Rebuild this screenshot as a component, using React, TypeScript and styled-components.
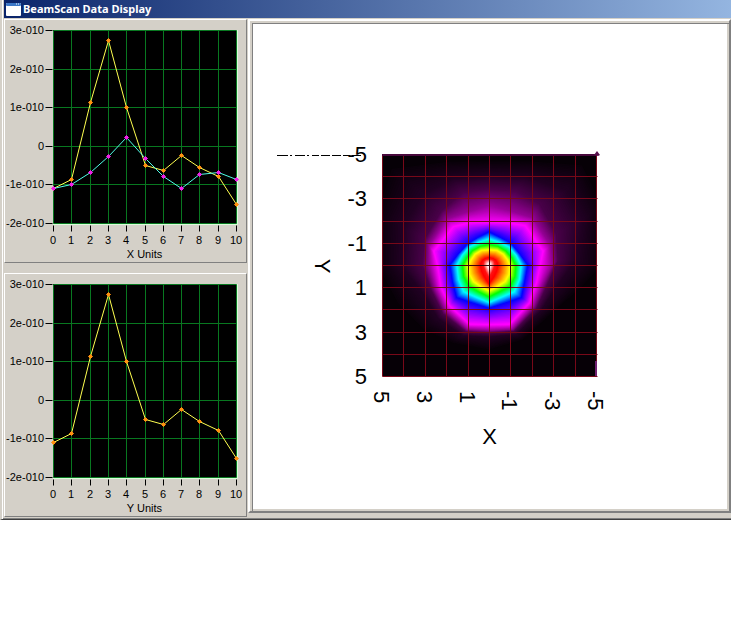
import React from "react";
import styled, { createGlobalStyle } from "styled-components";

const GlobalStyle = createGlobalStyle`
  * { box-sizing: border-box; }
  body { margin: 0; background: #fff; font-family: "Liberation Sans", Arial, sans-serif; }
`;

const Window = styled.main`
  background: #d4d0c8;
  border-left: 2px solid #d4d0c8;
  border-bottom: 1px solid #404040;
  box-shadow: inset 1px 0 #fff, inset 0 -1px #808080;
  padding: 0 0 2px 2px;
`;

const TitleBar = styled.header`
  display: flex;
  align-items: center;
  gap: 2px;
  height: 18px;
  padding-left: 2px;
  background: linear-gradient(to right, #0a246a, #94b5e0);
`;

const Title = styled.h1`
  margin: 0;
  color: #fff;
  font: bold 11px/18px "Noto Sans", "Open Sans", sans-serif;
  white-space: nowrap;
`;

const Body = styled.div`
  display: flex;
  gap: 1px;
`;

const Sidebar = styled.div`
  display: flex;
  flex: none;
  flex-direction: column;
  gap: 10px;
  width: 243px;
  padding-top: 1px;
`;

const ChartFrame = styled.section`
  border: 1px solid;
  border-color: #fff #808080 #808080 #fff;
  height: 244px;
`;

const PlotFrame = styled.section`
  display: flex;
  flex: 1;
  align-items: center;
  justify-content: center;
  min-width: 0;
  margin: 1px 0 4px;
  background: #fff;
  border: 2px solid;
  border-color: #fff #808080 #808080 #fff;
  box-shadow: inset 2px 2px #d4d0c8, inset 3px 3px #808080, inset -2px -2px #d4d0c8;
`;

const Drawing = styled.svg`
  display: block;
  flex: none;
`;

const AxisText = styled.text<{ $size: number }>`
  font-family: "Liberation Sans", Arial, sans-serif;
  font-size: ${(p) => p.$size}px;
  fill: #000;
`;

type Series = { line: string; marker: string; values: number[] };

const horizontal: Series = {
  line: "#ffff50",
  marker: "#ff9010",
  values: [-1.09, -0.87, 1.13, 2.74, 1, -0.5, -0.63, -0.24, -0.55, -0.77, -1.51],
};
const vertical: Series = {
  line: "#50ffe8",
  marker: "#f020e8",
  values: [-1.09, -1, -0.68, -0.27, 0.23, -0.32, -0.79, -1.1, -0.73, -0.68, -0.86],
};

const LEFT = 48;
const TOP = 10;
const WIDTH = 183;
const HEIGHT = 193;
const xAt = (i: number) => LEFT + Math.round((i * WIDTH) / 10);
const yAt = (v: number) => TOP + Math.round(((3 - v) * HEIGHT) / 5);
const units = Array.from({ length: 11 }, (_, i) => i);
const levels = [3, 2, 1, 0, -1, -2];

function LineChart({ label, series }: { label: string; series: Series[] }) {
  return (
    <ChartFrame>
      <Drawing width="241" height="242" viewBox="0 0 241 242" role="img" aria-label={label}>
        <rect x={LEFT} y={TOP} width={WIDTH} height={HEIGHT} fill="#000" />
        <g stroke="#087820" transform="translate(0.5 0.5)">
          {units.map((i) => (
            <path key={i} d={`M${xAt(i)} ${TOP}V${TOP + HEIGHT}`} />
          ))}
          {levels.map((v) => (
            <path key={v} d={`M${LEFT} ${yAt(v)}H${LEFT + WIDTH}`} />
          ))}
        </g>
        <path
          d={`M${LEFT} ${TOP + HEIGHT + 1.5}H${LEFT + WIDTH + 1.5}V${TOP}`}
          fill="none"
          stroke="#d8ffd8"
        />
        <g stroke="#000" transform="translate(0.5 0.5)">
          {levels.map((v) => (
            <path key={v} d={`M${LEFT - 8} ${yAt(v)}h7`} />
          ))}
          {units.map((i) => (
            <path key={i} d={`M${xAt(i)} ${TOP + HEIGHT + 2}v6`} />
          ))}
        </g>
        {levels.map((v) => (
          <AxisText key={v} $size={11} x={LEFT - 9} y={yAt(v) + 4} textAnchor="end">
            {v === 0 ? "0" : `${v}e-010`}
          </AxisText>
        ))}
        {units.map((i) => (
          <AxisText key={i} $size={11} x={xAt(i)} y={TOP + HEIGHT + 21} textAnchor="middle">
            {i}
          </AxisText>
        ))}
        <AxisText $size={11} x={LEFT + WIDTH / 2} y={TOP + HEIGHT + 35} textAnchor="middle">
          {label}
        </AxisText>
        {series.map((s) => (
          <g key={s.line} transform="translate(0.5 0.5)">
            <polyline
              points={s.values.map((v, i) => `${xAt(i)},${yAt(v)}`).join(" ")}
              fill="none"
              stroke={s.line}
            />
            {s.values.map((v, i) => (
              <path key={i} d={`M${xAt(i) - 2} ${yAt(v)}l2-2 2 2-2 2z`} fill={s.marker} stroke={s.marker} />
            ))}
          </g>
        ))}
      </Drawing>
    </ChartFrame>
  );
}

type Contour = { rgb: number[]; points: number[][] };

/* Sixteen vertices per contour, clockwise from the top, in thirds of a pixel. */
const contours: Contour[] = [
  {
    rgb: [8, 0, 8],
    points: [[358, 50], [480, 50], [640, 60], [700, 180], [700, 366], [640, 430], [570, 490], [460, 590], [358, 620], [250, 600], [160, 560], [80, 480], [20, 366], [20, 200], [60, 70], [240, 50]],
  },
  {
    rgb: [34, 0, 36],
    points: [[358, 95], [470, 100], [590, 140], [640, 230], [620, 350], [560, 430], [515, 500], [440, 572], [358, 580], [280, 576], [205, 525], [160, 450], [95, 366], [100, 250], [160, 150], [250, 105]],
  },
  {
    rgb: [74, 0, 74],
    points: [[358, 135], [440, 140], [510, 180], [560, 270], [565, 350], [530, 430], [500, 495], [433, 562], [358, 568], [289, 564], [220, 510], [185, 440], [158, 366], [165, 285], [215, 200], [280, 145]],
  },
  {
    rgb: [150, 0, 150],
    points: [[358, 185], [425, 202], [490, 222], [542, 305], [548, 360], [520, 420], [492, 488], [428, 556], [358, 560], [293, 556], [229, 502], [198, 440], [178, 366], [178, 305], [230, 226], [290, 205]],
  },
  {
    rgb: [255, 0, 255],
    points: [[358, 236], [416, 236], [468, 245], [522, 322], [512, 366], [502, 415], [480, 478], [420, 543], [358, 544], [300, 543], [239, 487], [213, 430], [203, 366], [191, 322], [250, 248], [300, 236]],
  },
  {
    rgb: [0, 0, 255],
    points: [[358, 264], [391, 280], [424, 298], [450, 330], [475, 364], [465, 415], [456, 462], [415, 476], [358, 494], [300, 476], [260, 462], [248, 415], [240, 364], [266, 330], [296, 298], [326, 280]],
  },
  {
    rgb: [0, 255, 255],
    points: [[358, 285], [388, 295], [418, 309], [440, 335], [455, 365], [450, 408], [434, 445], [396, 461], [358, 477], [319, 461], [282, 445], [266, 408], [261, 365], [277, 335], [299, 309], [328, 295]],
  },
  {
    rgb: [0, 255, 0],
    points: [[358, 303], [385, 308], [408, 321], [427, 343], [439, 366], [436, 399], [422, 428], [389, 445], [358, 460], [327, 445], [297, 428], [282, 399], [278, 366], [291, 343], [308, 321], [332, 308]],
  },
  {
    rgb: [255, 255, 0],
    points: [[358, 318], [382, 320], [401, 331], [414, 348], [422, 366], [419, 392], [407, 414], [382, 430], [358, 442], [334, 430], [311, 414], [299, 392], [295, 366], [304, 348], [316, 331], [335, 320]],
  },
  {
    rgb: [255, 0, 0],
    points: [[358, 341], [370, 344], [379, 349], [384, 358], [386, 366], [382, 383], [375, 398], [366, 411], [358, 422], [350, 411], [342, 398], [335, 383], [331, 366], [333, 358], [338, 349], [347, 344]],
  },
  {
    rgb: [255, 20, 20],
    points: [[358, 346], [367, 348], [373, 352], [375, 359], [375, 366], [371, 377], [367, 386], [362, 395], [358, 402], [354, 395], [349, 386], [345, 377], [341, 366], [341, 359], [343, 352], [349, 348]],
  },
  {
    rgb: [255, 235, 235],
    points: [[358, 357], [360, 358], [362, 360], [363, 363], [363, 366], [362, 369], [361, 372], [359, 375], [358, 378], [357, 375], [355, 372], [354, 369], [353, 366], [353, 363], [354, 360], [356, 358]],
  },
];

const STEPS = 16;
const mix = (a: number, b: number, t: number) => a + (b - a) * t;
const bands = contours.slice(1).flatMap((next, k) => {
  const from = contours[k];
  return Array.from({ length: STEPS }, (_, s) => {
    const t = (s + 1) / STEPS;
    return {
      fill: `rgb(${from.rgb.map((c, i) => Math.round(mix(c, next.rgb[i], t))).join(",")})`,
      points: from.points
        .map(([x, y], i) => `${mix(x, next.points[i][0], t)},${mix(y, next.points[i][1], t)}`)
        .join(" "),
    };
  });
});

const PLOT_X = 112;
const PLOT_Y = 88;
const PLOT_W = 215;
const PLOT_H = 222;
const ticks = [5, 3, 1, -1, -3, -5];
const colAt = (i: number) => PLOT_X + Math.round((i * (PLOT_W - 1)) / 10);
const rowAt = (i: number) => PLOT_Y + Math.round((i * PLOT_H) / 10);

function IntensityPlot() {
  return (
    <PlotFrame>
      <Drawing width="440" height="400" viewBox="0 0 440 400" role="img" aria-label="Beam intensity">
        <svg x={PLOT_X} y={PLOT_Y} width={PLOT_W} height={PLOT_H} viewBox="37 31 645 666">
          <rect x="37" y="31" width="645" height="666" fill="#060006" />
          {bands.map((b, i) => (
            <polygon key={i} points={b.points} fill={b.fill} />
          ))}
        </svg>
        <g stroke="#780818" transform="translate(0.5 0.5)">
          {units.map((i) => (
            <path key={i} d={`M${colAt(i)} ${PLOT_Y}v${PLOT_H}M${PLOT_X} ${rowAt(i)}h${PLOT_W}`} />
          ))}
        </g>
        <path
          d={`M${colAt(4)} ${rowAt(4)}H${colAt(6)}M${colAt(3)} ${rowAt(5)}H${colAt(7)}M${colAt(4)} ${rowAt(6)}H${colAt(6)}M${colAt(4)} ${rowAt(4)}V${rowAt(6)}M${colAt(5)} ${rowAt(4)}V${rowAt(7)}M${colAt(6)} ${rowAt(4)}V${rowAt(6)}`}
          stroke="#400008"
          fill="none"
          transform="translate(0.5 0.5)"
        />
        <path d={`M${PLOT_X} ${PLOT_Y + 1}h${PLOT_W}`} stroke="#48083c" strokeWidth="2" />
        <path d={`M${PLOT_X + PLOT_W - 3} ${PLOT_Y + 1}l3-4 3 4-2 1z`} fill="#58104c" />
        <path d={`M${PLOT_X + PLOT_W - 1} ${PLOT_Y + PLOT_H - 15}v15`} stroke="#702070" strokeWidth="2" />
        <path d="M7 89.5h11m2 0h2m3 0h10m2 0h2m3 0h7m2 0h9m2 0h9m2 0h7m2 0h9" stroke="#000" />
        {ticks.map((v, i) => (
          <AxisText key={v} $size={22} x="97" y={rowAt(10 - i * 2) + 8} textAnchor="end">
            {v}
          </AxisText>
        ))}
        {ticks.map((v, i) => (
          <AxisText key={v} $size={22} transform={`translate(${colAt(i * 2) - 8} ${PLOT_Y + PLOT_H + 15}) rotate(90)`}>
            {v}
          </AxisText>
        ))}
        <AxisText $size={22} transform="translate(45 200) rotate(90)" textAnchor="middle">
          Y
        </AxisText>
        <AxisText $size={22} x={PLOT_X + PLOT_W / 2} y="378" textAnchor="middle">
          X
        </AxisText>
      </Drawing>
    </PlotFrame>
  );
}

export default function App() {
  return (
    <>
      <GlobalStyle />
      <Window>
        <TitleBar>
          <svg width="15" height="13" viewBox="0 0 15 13" aria-hidden="true">
            <rect width="15" height="13" rx="1" fill="#fff" />
            <rect width="15" height="3" rx="1" fill="#3c78c8" />
            <path d="M10 1h1m1 0h1" stroke="#fff" />
          </svg>
          <Title>BeamScan Data Display</Title>
        </TitleBar>
        <Body>
          <Sidebar>
            <LineChart label="X Units" series={[horizontal, vertical]} />
            <LineChart label="Y Units" series={[horizontal]} />
          </Sidebar>
          <IntensityPlot />
        </Body>
      </Window>
    </>
  );
}
